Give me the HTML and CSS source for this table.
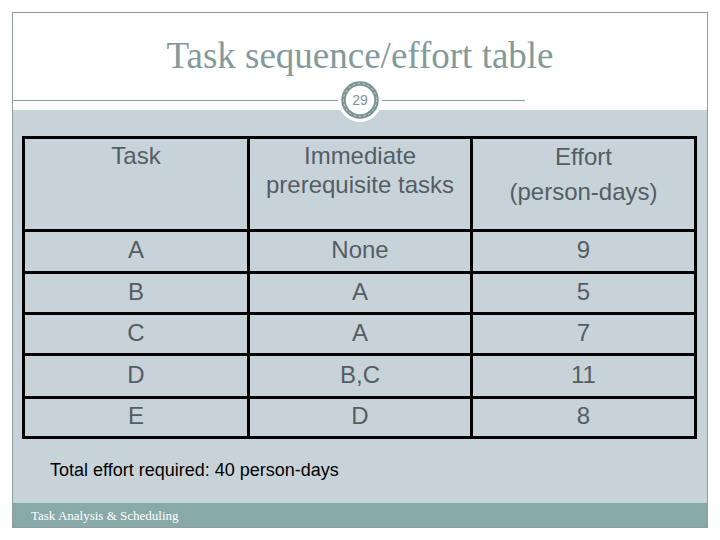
FILE: index.html
```html
<!DOCTYPE html>
<html>
<head>
<meta charset="utf-8">
<link rel="stylesheet" href="styles.css">
</head>
<body>
<div class="slide">
  <header class="head">
    <h1 class="title">Task sequence/effort table</h1>
    <div class="rule"></div>
    <div class="badge">
      <svg width="46" height="46" viewBox="0 0 46 46">
        <circle cx="23" cy="23" r="22" fill="#ffffff"/>
        <circle cx="23" cy="23" r="16.5" fill="#ffffff" stroke="#7f9595" stroke-width="4.5"/>
        <circle cx="23" cy="23" r="16.5" fill="none" stroke="#dfe6e6" stroke-width="0.8" stroke-dasharray="2 3"/>
      </svg>
      <span class="num">29</span>
    </div>
  </header>
  <main class="body">
    <table class="grid">
      <colgroup>
        <col class="c1"><col class="c2"><col class="c3">
      </colgroup>
      <thead>
        <tr class="hrow">
          <th>Task</th>
          <th>Immediate<br>prerequisite tasks</th>
          <th class="eff">Effort<br>(person-days)</th>
        </tr>
      </thead>
      <tbody>
        <tr class="r1"><td>A</td><td>None</td><td>9</td></tr>
        <tr class="r2"><td>B</td><td>A</td><td>5</td></tr>
        <tr class="r3"><td>C</td><td>A</td><td>7</td></tr>
        <tr class="r4"><td>D</td><td>B,C</td><td>11</td></tr>
        <tr class="r5"><td>E</td><td>D</td><td>8</td></tr>
      </tbody>
    </table>
    <p class="total">Total effort required: 40 person-days</p>
  </main>
  <footer class="foot">Task Analysis &amp; Scheduling</footer>
</div>
</body>
</html>
```

FILE: styles.css
```css
html, body {
  margin: 0;
  padding: 0;
  background: #ffffff;
}

.slide {
  margin: 12px;
  width: 696px;
  height: 516px;
  box-sizing: border-box;
  border: 1px solid #8e9c9c;
  display: flex;
  flex-direction: column;
}

.head {
  position: relative;
  height: 97px;
  flex: none;
  background: #ffffff;
}

.title {
  margin: 0;
  padding-top: 21px;
  height: 66px;
  text-align: center;
  font-family: "Liberation Serif", "DejaVu Serif", serif;
  font-weight: normal;
  font-size: 37px;
  line-height: 44px;
  color: #849999;
}

.rule {
  width: 512px;
  height: 1px;
  background: #8e9c9c;
}

.badge {
  position: absolute;
  left: 324px;
  top: 64px;
  width: 46px;
  height: 46px;
  z-index: 2;
}

.badge svg {
  display: block;
}

.num {
  position: absolute;
  left: 0;
  top: 0;
  width: 46px;
  height: 46px;
  line-height: 46px;
  text-align: center;
  font-family: "Liberation Sans", Arial, sans-serif;
  font-size: 14px;
  color: #7f9595;
}

.body {
  flex: 1;
  background: #c8d3d9;
  padding: 26px 0 0 9px;
  display: flex;
  flex-direction: column;
}

.grid {
  border-collapse: collapse;
  table-layout: fixed;
  width: 672px;
  border: 3px solid #000000;
  font-family: "Liberation Sans", Arial, sans-serif;
  font-size: 24px;
  color: #545d64;
}

.c1 { width: 225px; }
.c2 { width: 223px; }
.c3 { width: 224px; }

.grid th,
.grid td {
  border: 3px solid #000000;
  padding: 0;
  text-align: center;
  font-weight: normal;
}

.hrow { height: 93px; }

.grid th {
  vertical-align: top;
  padding-top: 2px;
  line-height: 29px;
}

.grid th.eff {
  line-height: 35px;
  padding-top: 0;
}

.r1 { height: 42px; }
.r2 { height: 41px; }
.r3 { height: 41px; }
.r4 { height: 43px; }
.r5 { height: 40px; }

.grid td {
  vertical-align: middle;
  line-height: 26px;
  padding-bottom: 3px;
}

.total {
  margin: 21px 0 0 28px;
  font-family: "Liberation Sans", Arial, sans-serif;
  font-size: 18px;
  color: #000000;
}

.foot {
  flex: none;
  height: 24px;
  background: #87aaa9;
  color: #ffffff;
  font-family: "Liberation Serif", "DejaVu Serif", serif;
  font-size: 13px;
  line-height: 25px;
  padding-left: 18px;
}
```
